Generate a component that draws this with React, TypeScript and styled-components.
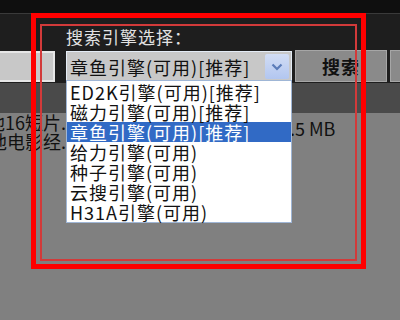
import styled, { createGlobalStyle } from 'styled-components';

const GlobalStyle = createGlobalStyle`
  html, body {
    margin: 0;
    padding: 0;
    background: #808080;
  }
  * {
    box-sizing: border-box;
  }
`;

const Page = styled.div`
  position: relative;
  width: 400px;
  height: 320px;
  overflow: hidden;
  background: #808080;
  font-family: 'Noto Sans CJK SC', 'Noto Sans', sans-serif;
`;

const TopBar = styled.div`
  height: 13px;
  background: #0f0f0f;
`;

const SearchPanel = styled.div`
  height: 70px;
  background: #1e1e1e;
  border-top: 1px solid #3a3a3a;
  display: flex;
  align-items: flex-end;
  padding-bottom: 1px;
`;

const KeywordInput = styled.div`
  width: 55px;
  height: 31px;
  flex-shrink: 0;
  margin-right: 11px;
  background: #c8c8c8;
  border: 2px solid #e6e6e6;
  border-left: none;
`;

const EngineField = styled.div`
  width: 226px;
  flex-shrink: 0;
  display: flex;
  flex-direction: column;
  gap: 4px;
`;

const FieldLabel = styled.div`
  color: #e2e2e2;
  font-size: 17px;
  letter-spacing: 1px;
  line-height: 20px;
  white-space: nowrap;
`;

const Select = styled.div`
  height: 31px;
  display: flex;
  align-items: center;
  justify-content: space-between;
  background: #c8c8c8;
  border: 1px solid #e4ecf6;
  padding: 0 2px 0 3px;
  color: #111;
  font-size: 18px;
  letter-spacing: 1px;
`;

const SelectValue = styled.span`
  white-space: nowrap;
  overflow: hidden;
  min-width: 0;
`;

const ArrowButton = styled.div`
  width: 24px;
  height: 25px;
  flex-shrink: 0;
  display: flex;
  align-items: center;
  justify-content: center;
  border-radius: 2px;
  background: linear-gradient(#d2ddf4, #b2c6f0);
`;

const PanelButton = styled.div<{ $width: number }>`
  width: ${(p) => p.$width}px;
  flex-shrink: 0;
  height: 32px;
  margin-left: 3px;
  display: flex;
  align-items: center;
  justify-content: center;
  background: #8a8a8a;
  border: 1px solid #a6a6a6;
  color: #111;
  font-size: 18px;
  font-weight: 700;
  letter-spacing: 1px;
`;

const HeaderBand = styled.div`
  height: 30px;
  background: #4a4a4a;
`;

const ResultRow = styled.div`
  display: grid;
  grid-template-columns: 66px 204px auto;
  color: #111;
  font-size: 18px;
  line-height: 19px;
`;

const NameLine = styled.div`
  width: 66px;
  display: flex;
  justify-content: flex-end;
  overflow: hidden;
  white-space: nowrap;
`;

const SizeCell = styled.div`
  grid-column: 3;
  padding-top: 6px;
  white-space: nowrap;
`;

const OptionList = styled.div`
  position: absolute;
  left: 66px;
  top: 80px;
  width: 226px;
  height: 143px;
  padding-top: 1px;
  background: #fff;
  border: 1px solid #9fb6d6;
`;

const Option = styled.div<{ $active?: boolean }>`
  height: 20px;
  line-height: 20px;
  padding-left: 3px;
  font-size: 18px;
  letter-spacing: 1px;
  white-space: nowrap;
  color: ${(p) => (p.$active ? '#fff' : '#111')};
  background: ${(p) => (p.$active ? '#316ac5' : 'transparent')};
`;

const Frame = styled.div<{ $left: number; $top: number; $w: number; $h: number; $line: number; $color: string }>`
  position: absolute;
  left: ${(p) => p.$left}px;
  top: ${(p) => p.$top}px;
  width: ${(p) => p.$w}px;
  height: ${(p) => p.$h}px;
  border: ${(p) => p.$line}px solid ${(p) => p.$color};
  pointer-events: none;
`;

const engines = [
  'ED2K引擎(可用)[推荐]',
  '磁力引擎(可用)[推荐]',
  '章鱼引擎(可用)[推荐]',
  '给力引擎(可用)',
  '种子引擎(可用)',
  '云搜引擎(可用)',
  'H31A引擎(可用)',
];

const Chevron = () => (
  <svg width="12" height="8" viewBox="0 0 12 8">
    <path d="M1.5 1.5 L6 6 L10.5 1.5" fill="none" stroke="#5b7cb8" strokeWidth="2.2" />
  </svg>
);

const App = () => {
  return (
    <Page>
      <GlobalStyle />
      <TopBar />
      <SearchPanel>
        <KeywordInput />
        <EngineField>
          <FieldLabel>搜索引擎选择：</FieldLabel>
          <Select>
            <SelectValue>章鱼引擎(可用)[推荐]</SelectValue>
            <ArrowButton>
              <Chevron />
            </ArrowButton>
          </Select>
        </EngineField>
        <PanelButton $width={92}>搜索</PanelButton>
        <PanelButton $width={40} />
      </SearchPanel>
      <HeaderBand />
      <ResultRow>
        <div>
          <NameLine>
            <span>其他16短片.</span>
          </NameLine>
          <NameLine>
            <span>其他电影经.</span>
          </NameLine>
        </div>
        <SizeCell>21.5 MB</SizeCell>
      </ResultRow>

      <OptionList>
        {engines.map((name, i) => (
          <Option key={name} $active={i === 2}>
            {name}
          </Option>
        ))}
      </OptionList>

      <Frame $left={31} $top={13} $w={335} $h={256} $line={5} $color="#ff0000" />
      <Frame $left={40} $top={24} $w={317} $h={237} $line={2} $color="#d23a3a" />
    </Page>
  );
};

export default App;
